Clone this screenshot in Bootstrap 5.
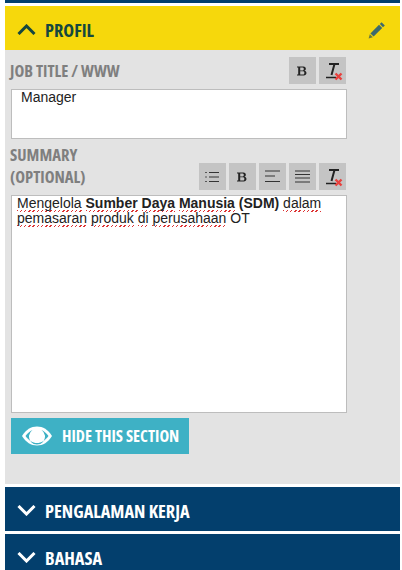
<!DOCTYPE html>
<html lang="en">
<head>
    <meta charset="UTF-8">
    <meta name="viewport" content="width=device-width, initial-scale=1.0">
    <title>Profil</title>
    <link href="https://cdn.jsdelivr.net/npm/bootstrap@5.3.0/dist/css/bootstrap.min.css" rel="stylesheet">
    <style>
        html, body {
            height: 570px;
            overflow: hidden;
        }
        body {
            background-color: #fff;
            padding: 0 2px 0 5px;
            font-family: "Liberation Sans", Arial, sans-serif;
        }
        .cond {
            font-family: "Open Sans", sans-serif;
            font-stretch: condensed;
            font-weight: 700;
            white-space: nowrap;
        }
        .top-strip {
            height: 3px;
            background-color: #033f6d;
            margin-bottom: 3px;
        }
        .sec-head {
            height: 44px;
            padding: 3px 14px 0 12px;
            font-size: 18.3px;
            color: #fff;
            background-color: #033f6d;
            margin-bottom: 3px;
        }
        .sec-head.open {
            background-color: #f6d80c;
            color: #15473f;
            margin-bottom: 0;
        }
        .sec-head svg.chev {
            width: 19px;
            height: 11px;
            margin-right: 9px;
        }
        .sec-head.open svg.chev {
            margin-top: -1px;
        }
        .sec-panel {
            height: 434px;
            background-color: #e3e3e3;
            padding: 7px 0 0 5px;
            margin-bottom: 3px;
        }
        .field-row {
            width: 336px;
        }
        .field-label {
            font-size: 16.6px;
            line-height: 22px;
            color: #7f7f7f;
        }
        .label-two {
            padding-bottom: 2px;
        }
        .tool-gap {
            gap: 3px;
        }
        .tool-btn {
            width: 27px;
            height: 27px;
            background-color: #c4c4c4;
        }
        .edit-box {
            width: 336px;
            margin-left: 1px;
            background-color: #fff;
            border: 1px solid #bdbdbd;
            color: #222;
            font-size: 14px;
            line-height: 15px;
        }
        .box-job {
            height: 50px;
            padding: 0 9px;
            margin-top: 5px;
            margin-bottom: 5px;
        }
        .box-sum {
            height: 218px;
            padding: 0 5px;
            margin-top: 5px;
            margin-bottom: 5px;
        }
        .spell {
            padding-bottom: 1px;
            background: repeating-linear-gradient(135deg, #d33 0 1px, transparent 1px 3px) left bottom / 100% 2px no-repeat;
        }
        .hide-btn {
            width: 178px;
            height: 36px;
            margin-left: 1px;
            background-color: #3eb1c5;
            color: #fff;
            font-size: 16.4px;
            padding-left: 10px;
        }
        .hide-btn svg {
            width: 32px;
            height: 22px;
            margin-right: 9px;
        }
    </style>
</head>
<body>
<div class="top-strip"></div>

<div class="sec-head open cond d-flex align-items-center">
    <svg class="chev" viewBox="0 0 19 11"><path d="M1.500 10 9.500 2l8 8" fill="none" stroke="currentColor" stroke-width="3"/></svg>
    <span class="flex-grow-1">PROFIL</span>
    <svg width="18" height="18" viewBox="0 0 18 18"><path d="M13.600 1.200 16.800 4.400 15 6.200 11.800 3Z" fill="#3d6a6d"/><path d="M11 3.800 14.200 7 5.600 15.600 2.400 12.400Z" fill="#3d6a6d"/><path d="M1.800 13.200 4.800 16.200 .6 17.400Z" fill="#6a7a3c"/></svg>
</div>

<div class="sec-panel">
    <div class="field-row d-flex align-items-center justify-content-between">
        <span class="field-label cond">JOB TITLE / WWW</span>
        <div class="d-flex tool-gap">
            <div class="tool-btn d-flex align-items-center justify-content-center"><svg width="11" height="10" viewBox="0 0 11 10"><path d="M0 .5h6.500c3 0 3 4 .8 4.300 3 .3 3 4.700-.6 4.700H0V8.600h1.200V1.500H0ZM3.200 1.500v3h2.500c1.500 0 1.500-3 0-3ZM3.200 5.300v3.300h3c1.600 0 1.600-3.300 0-3.300Z" fill="#222" fill-rule="evenodd"/></svg></div>
            <div class="tool-btn d-flex align-items-center justify-content-center"><svg width="20" height="20" viewBox="0 0 20 20"><path d="M6 3h10M11.500 3 8.500 14" fill="none" stroke="#222" stroke-width="2"/><path d="M3 16.500h10" stroke="#222" stroke-width="1.500"/><path d="M12.500 12.500l6 6M18.500 12.500l-6 6" stroke="#e8413e" stroke-width="2.400"/></svg></div>
        </div>
    </div>
    <div class="edit-box box-job">Manager</div>

    <div class="field-row d-flex align-items-end justify-content-between">
        <span class="field-label label-two cond">SUMMARY<br>(OPTIONAL)</span>
        <div class="d-flex tool-gap">
            <div class="tool-btn d-flex align-items-center justify-content-center"><svg width="15" height="12" viewBox="0 0 15 12"><path d="M4 1.500h10M4 6h10M4 10.500h10" stroke="#333"/><path d="M0 1h2v1H0ZM0 5.500h2v1H0ZM0 10h2v1H0Z" fill="#555"/></svg></div>
            <div class="tool-btn d-flex align-items-center justify-content-center"><svg width="11" height="10" viewBox="0 0 11 10"><path d="M0 .5h6.500c3 0 3 4 .8 4.300 3 .3 3 4.700-.6 4.700H0V8.600h1.200V1.500H0ZM3.200 1.500v3h2.500c1.500 0 1.500-3 0-3ZM3.200 5.300v3.300h3c1.600 0 1.600-3.300 0-3.300Z" fill="#222" fill-rule="evenodd"/></svg></div>
            <div class="tool-btn d-flex align-items-center justify-content-center"><svg width="15" height="13" viewBox="0 0 15 13"><path d="M0 1h15M0 6h10M0 11.500h15" stroke="#333"/></svg></div>
            <div class="tool-btn d-flex align-items-center justify-content-center"><svg width="15" height="13" viewBox="0 0 15 13"><path d="M0 1h15M0 4.500h15M0 8h15M0 12h15" stroke="#333"/></svg></div>
            <div class="tool-btn d-flex align-items-center justify-content-center"><svg width="20" height="20" viewBox="0 0 20 20"><path d="M6 3h10M11.500 3 8.500 14" fill="none" stroke="#222" stroke-width="2"/><path d="M3 16.500h10" stroke="#222" stroke-width="1.500"/><path d="M12.500 12.500l6 6M18.500 12.500l-6 6" stroke="#e8413e" stroke-width="2.400"/></svg></div>
        </div>
    </div>
    <div class="edit-box box-sum"><span class="spell">Mengelola</span> <b><span class="spell">Sumber</span> <span class="spell">Daya</span> <span class="spell">Manusia</span> (SDM)</b> <span class="spell">dalam</span><br><span class="spell">pemasaran</span> <span class="spell">produk</span> <span class="spell">di</span> <span class="spell">perusahaan</span> OT</div>

    <div class="hide-btn cond d-flex align-items-center">
        <svg viewBox="0 0 32 22"><path d="M1 11C5 4.500 10 1.500 16 1.500S27 4.500 31 11c-4 6.500-9 9.500-15 9.500S5 17.500 1 11Z" fill="#fff"/><path d="M4.500 11c2-2.800 4.300-4.800 7-6a8 8 0 1 0 9 0c2.700 1.200 5 3.200 7 6-3.500 4.800-7 7-11.500 7S8 15.800 4.500 11Z" fill="#3eb1c5"/><circle cx="16" cy="10" r="5.500" fill="#fff"/></svg>
        <span>HIDE THIS SECTION</span>
    </div>
</div>

<div class="sec-head cond d-flex align-items-center">
    <svg class="chev" viewBox="0 0 19 11"><path d="M1.500 1 9.500 9l8-8" fill="none" stroke="currentColor" stroke-width="3"/></svg>
    <span>PENGALAMAN KERJA</span>
</div>
<div class="sec-head cond d-flex align-items-center">
    <svg class="chev" viewBox="0 0 19 11"><path d="M1.500 1 9.500 9l8-8" fill="none" stroke="currentColor" stroke-width="3"/></svg>
    <span>BAHASA</span>
</div>
</body>
</html>
